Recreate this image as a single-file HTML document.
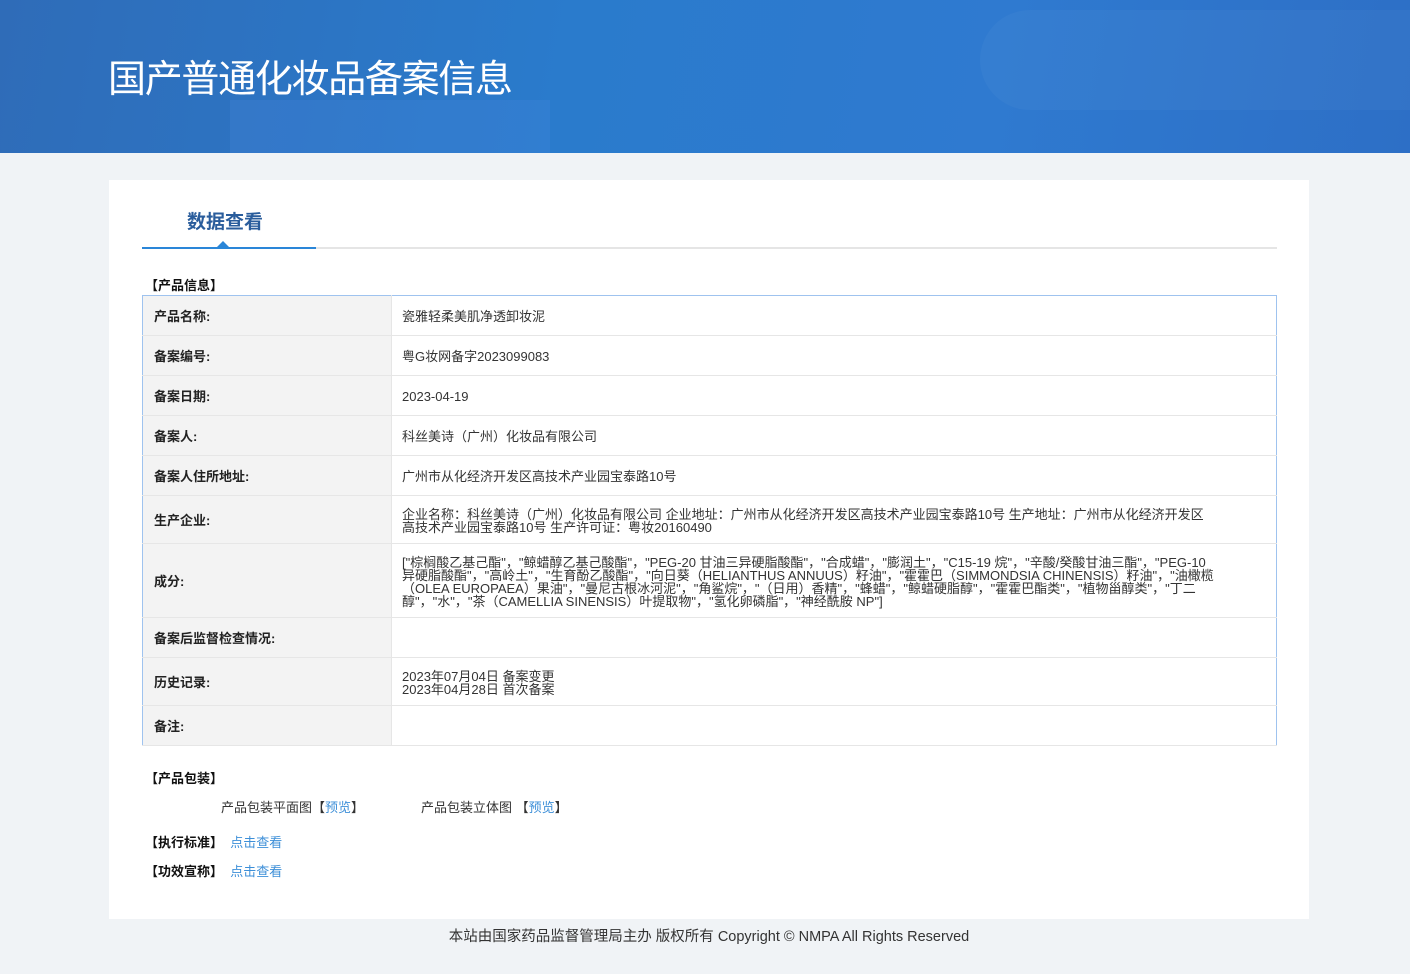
<!DOCTYPE html>
<html><head><meta charset="utf-8"><style>
*{margin:0;padding:0;box-sizing:border-box}
body{width:1410px;height:974px;background:#f0f3f6;font-family:"Liberation Sans","Noto Sans CJK SC",sans-serif;font-size:13px;color:#333;position:relative;overflow:hidden}
.hdr{position:absolute;left:0;top:0;width:1410px;height:153px;background:linear-gradient(100deg,#2f6cb8 0%,#2a7bcc 40%,#2f7ad0 70%,#2d6fc6 100%);overflow:hidden}
.hdr .s1{position:absolute;left:230px;top:100px;width:320px;height:60px;background:rgba(80,140,230,.2)}
.hdr .s2{position:absolute;left:980px;top:10px;width:500px;height:100px;border-radius:60px;background:rgba(255,255,255,.03)}
.hdr h1{position:absolute;left:108px;top:56px;font-size:38px;font-weight:normal;color:#fff;letter-spacing:-1.3px;line-height:48px}
.card{position:absolute;left:109px;top:180px;width:1200px;height:739px;background:#fff}
.tab{position:absolute;left:78px;top:27px;font-size:19px;font-weight:bold;color:#2a5d9c}
.line{position:absolute;left:33px;top:67px;width:1135px;height:2px;background:#e5e5e5}
.line2{position:absolute;left:33px;top:67px;width:174px;height:2px;background:#2a86d8}
.tri{position:absolute;left:108px;top:61px;width:0;height:0;border-left:6px solid transparent;border-right:6px solid transparent;border-bottom:6px solid #2a86d8}
.sec{position:absolute;font-weight:bold;color:#111;font-size:13px}
table{position:absolute;left:33px;top:115px;width:1135px;border-collapse:collapse;border:1px solid #9fc3ef}
td{border-bottom:1px solid #e6e6e6;vertical-align:middle;font-size:13px;line-height:13px}
td.l{width:249px;background:#f3f3f3;font-weight:bold;padding-left:11px;padding-top:2px;color:#222;border-right:1px solid #e6e6e6}
td.v{padding-left:10px;padding-right:60px;padding-top:2px;color:#333}
a{color:#3d8fd8;text-decoration:none}
.foot{position:absolute;top:925px;left:0;width:1418px;text-align:center;font-size:14.5px;color:#333}
</style></head><body>
<div class="hdr"><div class="s1"></div><div class="s2"></div><h1>国产普通化妆品备案信息</h1></div>
<div class="card">
<div class="tab">数据查看</div>
<div class="line"></div><div class="line2"></div><div class="tri"></div>
<div class="sec" style="left:36px;top:95px">【产品信息】</div>
<table>
<tr style="height:40px"><td class="l">产品名称:</td><td class="v">瓷雅轻柔美肌净透卸妆泥</td></tr>
<tr style="height:40px"><td class="l">备案编号:</td><td class="v">粤G妆网备字2023099083</td></tr>
<tr style="height:40px"><td class="l">备案日期:</td><td class="v">2023-04-19</td></tr>
<tr style="height:40px"><td class="l">备案人:</td><td class="v">科丝美诗（广州）化妆品有限公司</td></tr>
<tr style="height:40px"><td class="l">备案人住所地址:</td><td class="v">广州市从化经济开发区高技术产业园宝泰路10号</td></tr>
<tr style="height:48px"><td class="l">生产企业:</td><td class="v">企业名称：科丝美诗（广州）化妆品有限公司 企业地址：广州市从化经济开发区高技术产业园宝泰路10号 生产地址：广州市从化经济开发区高技术产业园宝泰路10号 生产许可证：粤妆20160490</td></tr>
<tr style="height:74px"><td class="l">成分:</td><td class="v">["棕榈酸乙基己酯"，"鲸蜡醇乙基己酸酯"，"PEG-20 甘油三异硬脂酸酯"，"合成蜡"，"膨润土"，"C15-19 烷"，"辛酸/癸酸甘油三酯"，"PEG-10 异硬脂酸酯"，"高岭土"，"生育酚乙酸酯"，"向日葵（HELIANTHUS ANNUUS）籽油"，"霍霍巴（SIMMONDSIA CHINENSIS）籽油"，"油橄榄（OLEA EUROPAEA）果油"，"曼尼古根冰河泥"，"角鲨烷"，"（日用）香精"，"蜂蜡"，"鲸蜡硬脂醇"，"霍霍巴酯类"，"植物甾醇类"，"丁二醇"，"水"，"茶（CAMELLIA SINENSIS）叶提取物"，"氢化卵磷脂"，"神经酰胺 NP"]</td></tr>
<tr style="height:40px"><td class="l">备案后监督检查情况:</td><td class="v"></td></tr>
<tr style="height:48px"><td class="l">历史记录:</td><td class="v">2023年07月04日 备案变更<br>2023年04月28日 首次备案</td></tr>
<tr style="height:40px"><td class="l">备注:</td><td class="v"></td></tr>
</table>
<div class="sec" style="left:36px;top:588px">【产品包装】</div>
<div style="position:absolute;left:112px;top:617px">产品包装平面图【<a>预览</a>】</div>
<div style="position:absolute;left:312px;top:617px">产品包装立体图 【<a>预览</a>】</div>
<div class="sec" style="left:36px;top:652px">【执行标准】 &nbsp;<a style="font-weight:normal">点击查看</a></div>
<div class="sec" style="left:36px;top:681px">【功效宣称】 &nbsp;<a style="font-weight:normal">点击查看</a></div>
</div>
<div class="foot">本站由国家药品监督管理局主办 版权所有 Copyright © NMPA All Rights Reserved</div>
</body></html>
